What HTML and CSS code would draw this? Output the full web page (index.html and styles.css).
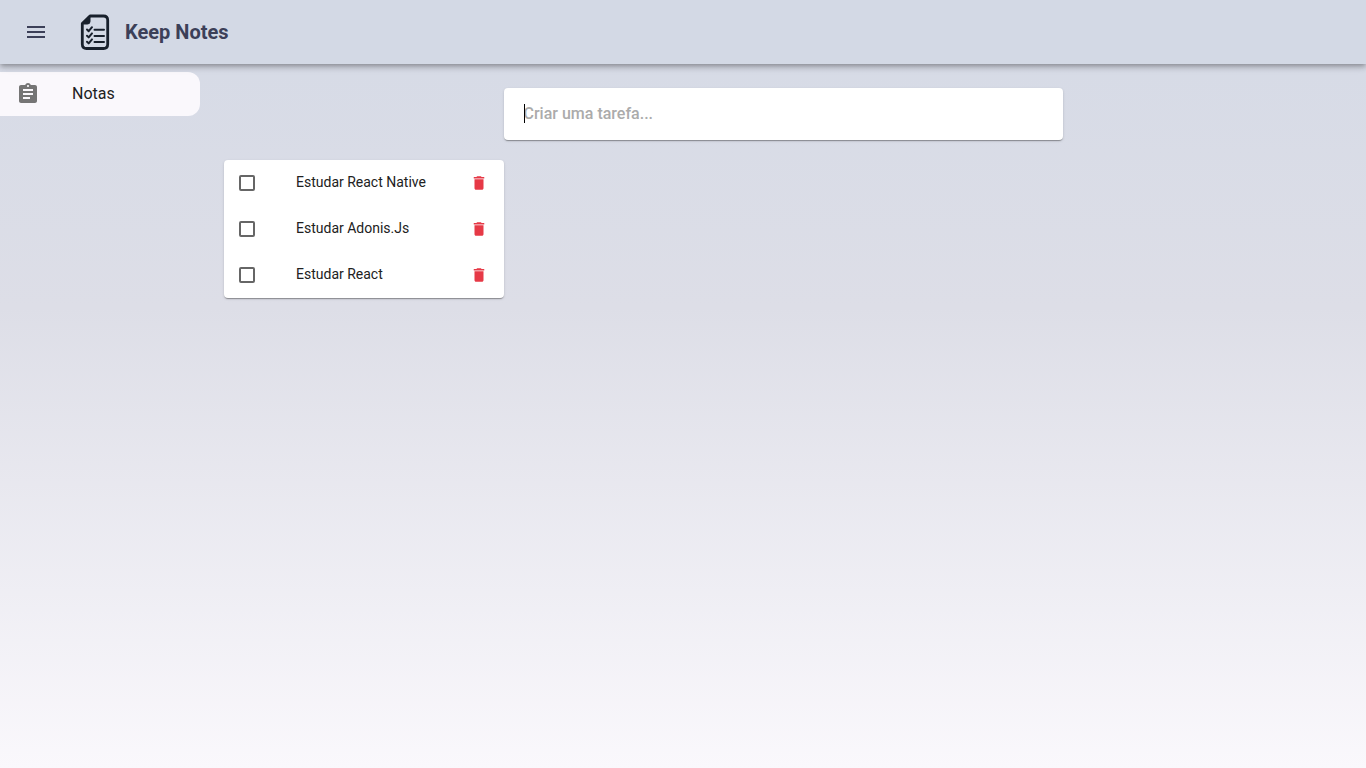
FILE: index.html
```html
<!DOCTYPE html>
<html lang="pt-BR">
<head>
  <meta charset="utf-8">
  <meta name="viewport" content="width=device-width, initial-scale=1">
  <title>Keep Notes</title>
  <link rel="stylesheet" href="styles.css">
</head>
<body>
  <header class="appbar">
    <button class="icon-button menu-button" type="button" aria-label="Abrir menu">
      <svg viewBox="0 0 24 24" width="24" height="24" aria-hidden="true"><path d="M3 18h18v-2H3v2zm0-5h18v-2H3v2zm0-7v2h18V6H3z"/></svg>
    </button>
    <svg class="logo" viewBox="0 0 30 38" width="30" height="38" aria-hidden="true">
      <path class="logo-sheet" d="M10 3H23.500Q27.700 3 27.700 7.200V31.300Q27.700 35.500 23.500 35.500H6.500Q2.300 35.500 2.300 31.300V10.500Z"/>
      <path class="logo-fold" d="M2 10.500L10 2.500V8.500Q10 11 7.500 11H2Z"/>
      <path class="logo-check" d="M7 16.500L8.700 18.200L12 14.200M7 22.700L8.700 24.400L12 20.400M7 28.700L8.700 30.400L12 26.400"/>
      <path class="logo-line" d="M14.500 16.800H24M14.500 23H24M14.500 29.100H24"/>
    </svg>
    <h1 class="brand">Keep Notes</h1>
  </header>
  <div class="layout">
    <nav class="sidebar" aria-label="Principal">
      <a class="nav-item" href="#notas">
        <svg viewBox="0 0 24 24" width="24" height="24" aria-hidden="true"><path d="M19 3h-4.180C14.400 1.840 13.300 1 12 1s-2.400.84-2.820 2H5c-1.100 0-2 .9-2 2v14c0 1.100.9 2 2 2h14c1.100 0 2-.9 2-2V5c0-1.100-.9-2-2-2zm-7 0c.55 0 1 .45 1 1s-.45 1-1 1-1-.45-1-1 .45-1 1-1zm2 14H7v-2h7v2zm3-4H7v-2h10v2zm0-4H7V7h10v2z"/></svg>
        <span>Notas</span>
      </a>
    </nav>
    <main class="content">
      <form class="composer">
        <input class="composer-input" type="text" aria-label="Criar uma tarefa" placeholder="Criar uma tarefa..." autofocus>
      </form>
      <ul class="tasks">
        <li class="task">
          <input class="task-check" id="task-1" type="checkbox">
          <label class="task-label" for="task-1">Estudar React Native</label>
          <button class="icon-button delete-button" type="button" aria-label="Excluir Estudar React Native">
            <svg viewBox="0 0 24 24" width="18" height="18" aria-hidden="true"><path d="M6 19c0 1.100.9 2 2 2h8c1.100 0 2-.9 2-2V7H6v12zM19 4h-3.500l-1-1h-5l-1 1H5v2h14V4z"/></svg>
          </button>
        </li>
        <li class="task">
          <input class="task-check" id="task-2" type="checkbox">
          <label class="task-label" for="task-2">Estudar Adonis.Js</label>
          <button class="icon-button delete-button" type="button" aria-label="Excluir Estudar Adonis.Js">
            <svg viewBox="0 0 24 24" width="18" height="18" aria-hidden="true"><path d="M6 19c0 1.100.9 2 2 2h8c1.100 0 2-.9 2-2V7H6v12zM19 4h-3.500l-1-1h-5l-1 1H5v2h14V4z"/></svg>
          </button>
        </li>
        <li class="task">
          <input class="task-check" id="task-3" type="checkbox">
          <label class="task-label" for="task-3">Estudar React</label>
          <button class="icon-button delete-button" type="button" aria-label="Excluir Estudar React">
            <svg viewBox="0 0 24 24" width="18" height="18" aria-hidden="true"><path d="M6 19c0 1.100.9 2 2 2h8c1.100 0 2-.9 2-2V7H6v12zM19 4h-3.500l-1-1h-5l-1 1H5v2h14V4z"/></svg>
          </button>
        </li>
      </ul>
    </main>
  </div>
</body>
</html>
```
FILE: styles.css
```css
*,
*::before,
*::after {
  box-sizing: border-box;
}

body {
  display: flex;
  flex-direction: column;
  min-height: 100vh;
  margin: 0;
  font-family: Roboto, "Liberation Sans", sans-serif;
  font-size: 16px;
  line-height: 24px;
  color: #212121;
  background: linear-gradient(180deg, #d5dae6 0%, #dddee7 40%, #faf8fc 100%);
}

.icon-button {
  display: flex;
  align-items: center;
  justify-content: center;
  padding: 0;
  border: 0;
  border-radius: 50%;
  background: none;
  cursor: pointer;
}

.appbar {
  position: relative;
  display: flex;
  align-items: center;
  height: 64px;
  padding: 0 24px;
  background: #d3d9e5;
  box-shadow: 0 2px 4px -1px rgba(0, 0, 0, 0.2), 0 4px 5px 0 rgba(0, 0, 0, 0.14), 0 1px 10px 0 rgba(0, 0, 0, 0.12);
}

.menu-button {
  margin-right: 32px;
  fill: #3c4058;
}

.logo {
  margin-right: 15px;
  fill: none;
  stroke: #18202c;
  stroke-linecap: round;
  stroke-linejoin: round;
}

.logo-sheet {
  stroke-width: 2.8;
}

.logo-fold {
  fill: #18202c;
}

.logo-check,
.logo-line {
  stroke-width: 2;
}

.brand {
  margin: 0;
  font-size: 20px;
  font-weight: 700;
  line-height: 32px;
  color: #3c4058;
}

.layout {
  display: flex;
  flex: 1;
}

.sidebar {
  flex: 0 0 200px;
  padding-top: 8px;
}

.nav-item {
  display: flex;
  align-items: center;
  gap: 32px;
  height: 44px;
  padding: 0 16px;
  border-radius: 0 12px 12px 0;
  color: #212121;
  background: #faf8fc;
  text-decoration: none;
}

.nav-item svg {
  fill: #757575;
}

.content {
  flex: 1;
  padding: 24px;
}

.composer,
.tasks {
  border-radius: 4px;
  background: #fff;
  box-shadow: 0 2px 1px -1px rgba(0, 0, 0, 0.2), 0 1px 1px 0 rgba(0, 0, 0, 0.14), 0 1px 3px 0 rgba(0, 0, 0, 0.12);
}

.composer {
  position: relative;
  display: flex;
  align-items: center;
  width: 50%;
  height: 52px;
  margin: 0 auto 20px;
  padding: 0 20px;
}

/* Steady caret shown while the field is empty */
.composer:has(.composer-input:placeholder-shown)::before {
  content: "";
  position: absolute;
  top: 16px;
  left: 20px;
  width: 1px;
  height: 19px;
  background: #000;
}

.composer-input {
  flex: 1;
  min-width: 0;
  padding: 0;
  border: 0;
  outline: 0;
  font: inherit;
  font-weight: 500;
  color: #212121;
  background: none;
}

.composer-input::placeholder {
  color: #ababab;
  opacity: 1;
}

.tasks {
  width: 25%;
  margin: 0;
  padding: 0;
  list-style: none;
}

.task {
  display: flex;
  align-items: center;
  height: 46px;
  padding: 0 16px 0 15px;
}

.task-check {
  appearance: none;
  width: 16px;
  height: 16px;
  margin: 0 41px 0 0;
  border: 2px solid #666;
  border-radius: 2px;
}

.task-check:checked {
  background: #666;
}

.task-label {
  flex: 1;
  padding-bottom: 2px;
  font-size: 14px;
  line-height: 20px;
}

.delete-button {
  fill: #e63946;
}
```
